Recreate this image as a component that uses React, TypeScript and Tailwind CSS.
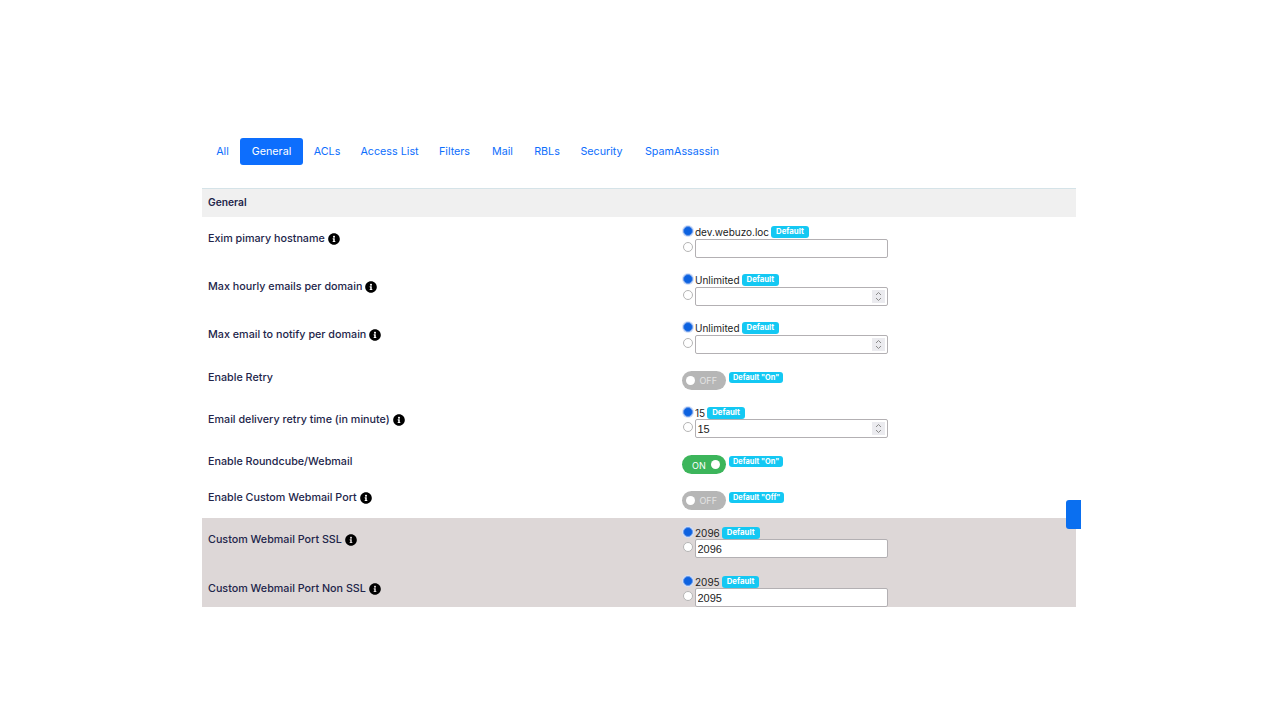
import { FaInfoCircle } from 'react-icons/fa'

const tabs = [
  { name: 'All', width: 'w-[35px]' },
  { name: 'General', width: 'w-[63px]' },
  { name: 'ACLs', width: 'w-[48px]' },
  { name: 'Access List', width: 'w-[77px]' },
  { name: 'Filters', width: 'w-[53px]' },
  { name: 'Mail', width: 'w-[43px]' },
  { name: 'RBLs', width: 'w-[46px]' },
  { name: 'Security', width: 'w-[63px]' },
  { name: 'SpamAssassin', width: 'w-[98px]' },
]

function Badge({ text, small }: { text: string; small?: boolean }) {
  return (
    <span
      className={
        small
          ? 'flex h-[11px] items-center rounded-[3px] bg-[#14c8f3] px-[4px] text-[7.4px] font-bold leading-none text-white'
          : 'flex h-[12px] items-center rounded-[3px] bg-[#14c8f3] px-[5px] text-[7.8px] font-bold leading-none text-white'
      }
    >
      {text}
    </span>
  )
}

function Radio({ checked }: { checked?: boolean }) {
  return (
    <input
      type="radio"
      readOnly
      checked={!!checked}
      className="block h-[10px] w-[10px] shrink-0 appearance-none rounded-full border border-[#b5b5b5] bg-white checked:border-[#6b9bea] checked:bg-[#0d62e0] checked:shadow-[0_0_0_1px_#d3e0f8]"
    />
  )
}

function Spinner() {
  return (
    <div className="absolute right-[3px] top-[3px] flex h-[13px] w-[13px] items-center justify-center bg-[#ebebef]">
      <svg viewBox="0 0 13 13" className="h-[13px] w-[13px]" fill="none" stroke="#8a8a8a" strokeWidth="1">
        <path d="M4 5 6.5 2.5 9 5" />
        <path d="M4 8 6.5 10.5 9 8" />
      </svg>
    </div>
  )
}

function ChoiceField({ label, value, spin, tight }: { label: string; value?: string; spin?: boolean; tight?: boolean }) {
  return (
    <div className="flex flex-col pt-[9px]">
      <div className="flex h-[12px] items-center gap-[2px]">
        <div className="-mt-[2px] flex">
          <Radio checked />
        </div>
        <span className="text-[10px] leading-none text-[#222]">{label}</span>
        <Badge text="Default" />
      </div>
      <div className={tight ? 'flex items-center gap-[2px]' : 'mt-[1px] flex items-center gap-[2px]'}>
        <div className="-mt-[3px] flex">
          <Radio />
        </div>
        <div className="relative">
          <input
            type="text"
            readOnly
            value={value ?? ''}
            className="block h-[19px] w-[193px] rounded-[2px] border border-[#b3b0b3] bg-white pl-[1.5px] pr-[1px] font-['Liberation_Sans',sans-serif] text-[11px] text-[#222]"
          />
          {spin && <Spinner />}
        </div>
      </div>
    </div>
  )
}

function Toggle({ on, badge }: { on?: boolean; badge: string }) {
  return (
    <div className="flex items-start gap-[3px]">
      <div
        className={
          on
            ? 'flex h-[19px] w-[44px] items-center justify-between rounded-full bg-[#3cb55b] pl-[10px] pr-[6px]'
            : 'flex h-[19px] w-[44px] items-center justify-between rounded-full bg-[#b6b6b6] pl-[4px] pr-[9px]'
        }
      >
        {on ? (
          <>
            <span className="pt-[1px] text-[9px] leading-none text-white">ON</span>
            <span className="-mt-[1px] h-[9px] w-[9px] rounded-full bg-white" />
          </>
        ) : (
          <>
            <span className="-mt-[1px] h-[9px] w-[9px] rounded-full bg-white" />
            <span className="text-[9px] leading-none text-[#e4e4e4]">OFF</span>
          </>
        )}
      </div>
      <div className="flex pt-[1px]">
        <Badge small text={badge} />
      </div>
    </div>
  )
}

function Label({ text, info }: { text: string; info?: boolean }) {
  return (
    <div className="flex items-center gap-[3px] pl-[6px] text-[10.75px] font-medium leading-none text-[#22254a]">
      <span>{text}</span>
      {info && <FaInfoCircle className="h-[12px] w-[12px] text-black" />}
    </div>
  )
}

export default function App() {
  return (
    <div className="relative h-[720px] w-full bg-white pl-[202px] pt-[138px] font-['Inter',sans-serif]">
      <nav className="flex h-[27px] items-center pl-[3px] text-[10.75px]">
        {tabs.map(tab => (
          <span
            key={tab.name}
            className={
              tab.name === 'General'
                ? `flex h-[27px] items-center justify-center rounded-[3px] bg-[#0d6efd] pt-[1px] text-white ${tab.width}`
                : `flex h-[27px] items-center justify-center pt-[1px] text-[#0d6efd] ${tab.width}`
            }
          >
            {tab.name}
          </span>
        ))}
      </nav>

      <div className="mt-[23px] h-[419px] w-[874px] overflow-hidden">
        <div className="flex h-[29px] items-center border-t border-[#d5e3e8] bg-[#f0f0f0] pl-[6px] text-[10.25px] font-semibold text-[#22254a]">
          General
        </div>

        <div className="grid h-[48px] grid-cols-[480px_1fr]">
          <div className="pt-[16px]"><Label text="Exim pimary hostname" info /></div>
          <div className="pl-[1px]"><ChoiceField label="dev.webuzo.loc" /></div>
        </div>
        <div className="grid h-[48px] grid-cols-[480px_1fr]">
          <div className="pt-[16px]"><Label text="Max hourly emails per domain" info /></div>
          <div className="pl-[1px]"><ChoiceField label="Unlimited" spin /></div>
        </div>
        <div className="grid h-[48px] grid-cols-[480px_1fr]">
          <div className="pt-[16px]"><Label text="Max email to notify per domain" info /></div>
          <div className="pl-[1px]"><ChoiceField label="Unlimited" spin /></div>
        </div>
        <div className="grid h-[37px] grid-cols-[480px_1fr]">
          <div className="pt-[12px]"><Label text="Enable Retry" /></div>
          <div className="pt-[10px]"><Toggle badge={'Default "On"'} /></div>
        </div>
        <div className="grid h-[49px] grid-cols-[480px_1fr]">
          <div className="pt-[16px]"><Label text="Email delivery retry time (in minute)" info /></div>
          <div className="pl-[1px]"><ChoiceField label="15" value="15" spin tight /></div>
        </div>
        <div className="grid h-[36px] grid-cols-[480px_1fr]">
          <div className="pt-[10px]"><Label text="Enable Roundcube/Webmail" /></div>
          <div className="pt-[8px]"><Toggle on badge={'Default "On"'} /></div>
        </div>
        <div className="grid h-[35px] grid-cols-[480px_1fr]">
          <div className="pt-[9px]"><Label text="Enable Custom Webmail Port" info /></div>
          <div className="pt-[8px]"><Toggle badge={'Default "Off"'} /></div>
        </div>
        <div className="grid h-[49px] grid-cols-[480px_1fr] bg-[#ddd7d7]">
          <div className="pt-[16px]"><Label text="Custom Webmail Port SSL" info /></div>
          <div className="pl-[1px]"><ChoiceField label="2096" value="2096" tight /></div>
        </div>
        <div className="grid h-[49px] grid-cols-[480px_1fr] bg-[#ddd7d7]">
          <div className="pt-[16px]"><Label text="Custom Webmail Port Non SSL" info /></div>
          <div className="pl-[1px]"><ChoiceField label="2095" value="2095" tight /></div>
        </div>
      </div>

      {/* floating side button */}
      <div className="absolute left-[1066px] top-[500px] h-[29px] w-[15px] rounded-l-[3px] bg-[#0a6ff0]" />
    </div>
  )
}
